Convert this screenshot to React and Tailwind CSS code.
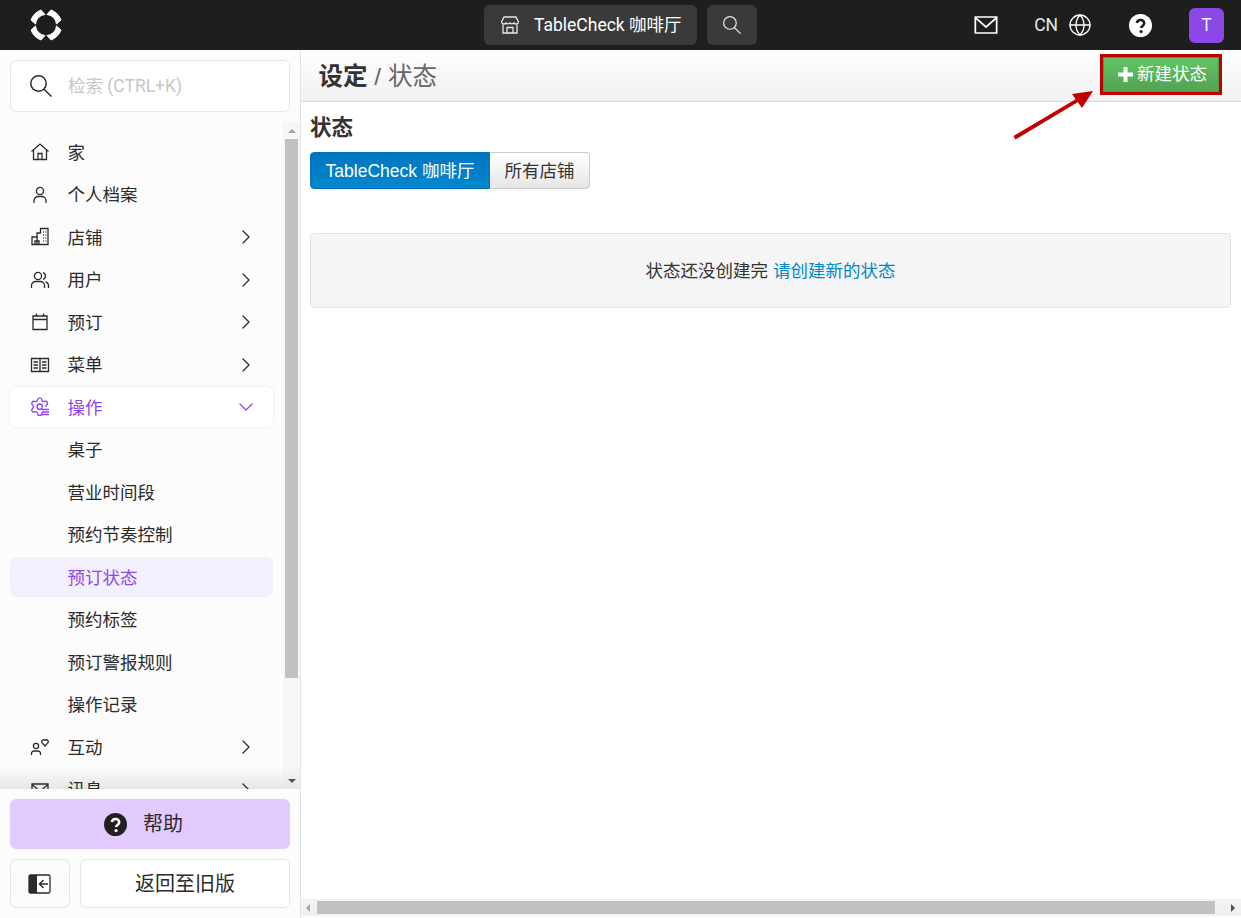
import React from 'react';
import { ChevronRight, ChevronDown, Globe } from 'lucide-react';

const CJK = 'font-["Roboto","Noto_Sans_CJK_SC",sans-serif]';

const HomeIcon = () => (
  <svg width="20" height="20" viewBox="0 0 20 20" fill="none" stroke="currentColor" strokeWidth="1.3">
    <path d="M1.500 9.500 10 2l8.500 7.500" />
    <path d="M3.500 8v9.500h13V8" />
    <path d="M8 17.500v-6h4v6" />
  </svg>
);
const UserIcon = () => (
  <svg width="20" height="20" viewBox="0 0 20 20" fill="none" stroke="currentColor" strokeWidth="1.3">
    <circle cx="10" cy="6" r="3.600" />
    <path d="M4 18v-2.500a4 4 0 0 1 4-4h4a4 4 0 0 1 4 4V18" />
  </svg>
);
const StoreIcon = () => (
  <svg width="20" height="20" viewBox="0 0 20 20" fill="none" stroke="currentColor" strokeWidth="1.3">
    <path d="M2 17.500V10h5V6h3.500V1.500H18v16z" />
    <path d="M7 10v7.500M5 17.500v-3.500h4v3.500" />
    <path d="M13 5h.8M15.500 5h.8M13 8h.8M15.500 8h.8M13 11h.8M15.500 11h.8M13 14h.8M15.500 14h.8" />
  </svg>
);
const UsersIcon = () => (
  <svg width="20" height="20" viewBox="0 0 20 20" fill="none" stroke="currentColor" strokeWidth="1.3">
    <circle cx="8" cy="6" r="3.600" />
    <path d="M1.500 18v-2.500a4 4 0 0 1 4-4h5a4 4 0 0 1 4 4V18" />
    <path d="M13 2.600a3.600 3.600 0 0 1 0 6.800M15.500 11.800a4 4 0 0 1 3 3.700V18" />
  </svg>
);
const CalendarIcon = () => (
  <svg width="20" height="20" viewBox="0 0 20 20" fill="none" stroke="currentColor" strokeWidth="1.3">
    <path d="M3 4h14v13.500H3zM3 7.500h14M6.500 1.500V4M13.500 1.500V4" />
  </svg>
);
const MenuBookIcon = () => (
  <svg width="20" height="20" viewBox="0 0 20 20" fill="none" stroke="currentColor" strokeWidth="1.3">
    <path d="M1.500 3.500h17v13h-17zM10 3.500v13" />
    <path d="M3.500 7h4.500M3.500 10h4.500M3.500 13h4.500M12 7h4.500M12 10h4.500M12 13h4.500" />
  </svg>
);
const GearListIcon = () => (
  <svg width="20" height="20" viewBox="0 0 20 20" fill="none" stroke="currentColor">
    <defs>
      <clipPath id="gear-cut">
        <path d="M0 0h24v12.500h-8.500V24H0z" />
      </clipPath>
    </defs>
    <g clipPath="url(#gear-cut)" strokeWidth="1.600" transform="scale(0.88) translate(-1 -1)">
      <path d="M9.671 4.136a2.34 2.34 0 0 1 4.659 0 2.34 2.34 0 0 0 3.319 1.915 2.34 2.34 0 0 1 2.33 4.033 2.34 2.34 0 0 0 0 3.831 2.34 2.34 0 0 1-2.33 4.033 2.34 2.34 0 0 0-3.319 1.915 2.34 2.34 0 0 1-4.659 0 2.34 2.34 0 0 0-3.32-1.915 2.34 2.34 0 0 1-2.33-4.033 2.34 2.34 0 0 0 0-3.831A2.34 2.34 0 0 1 6.35 6.051a2.34 2.34 0 0 0 3.319-1.915" />
      <circle cx="12" cy="12" r="3" />
    </g>
    <path d="M12 12.500h7M12 15h7M12 17.500h7" strokeWidth="1.300" />
  </svg>
);
const EngageIcon = () => (
  <svg width="20" height="20" viewBox="0 0 20 20" fill="none" stroke="currentColor" strokeWidth="1.3">
    <circle cx="6" cy="9" r="2.600" />
    <path d="M1.500 18v-1.500a2.500 2.500 0 0 1 2.500-2.500h4a2.500 2.500 0 0 1 2.500 2.500V18" />
    <path d="M15 9 11.800 5.500a2 2 0 0 1 3.200-2.200 2 2 0 0 1 3.200 2.200z" />
  </svg>
);
const EnvelopeIcon = ({ width = 20, height = 20, view = '0 0 20 20' }) => (
  <svg width={width} height={height} viewBox={view} fill="none" stroke="currentColor" strokeWidth="1.3">
    <path d="M2 4h16v12H2zM2 4.500l8 7 8-7" />
  </svg>
);
const StorefrontIcon = () => (
  <svg width="20" height="20" viewBox="0 0 20 20" fill="none" stroke="currentColor" strokeWidth="1.300">
    <path d="M4 2h12l2.500 5a2.500 2.500 0 0 1-4.500 1 3 3 0 0 1-4 0 3 3 0 0 1-4 0 2.500 2.500 0 0 1-4.500-1z" />
    <path d="M3 9.500V18h14V9.500M7 18v-5.500h6V18" />
  </svg>
);
const MagnifierIcon = ({ size, className }) => (
  <svg width={size} height={size} viewBox="0 0 22 22" fill="none" stroke="currentColor" strokeWidth="1.500" className={className}>
    <circle cx="8.500" cy="8.500" r="7.700" />
    <path d="M14 14.300 21.500 21.500" />
  </svg>
);
const QuestionDot = ({ size, bg, fg }) => (
  <svg width={size} height={size} viewBox="0 0 24 24">
    <circle cx="12" cy="12" r="12" fill={bg} />
    <path d="M8.200 9.300a3.900 3.900 0 0 1 7.700.4c0 2.600-3.300 2.800-3.300 5" fill="none" stroke={fg} strokeWidth="2.700" />
    <circle cx="12.600" cy="18.300" r="1.700" fill={fg} />
  </svg>
);
const petal = 'M1 11A17 17 0 0 1 11 1L15 5.500A10.500 10.500 0 0 0 5.500 15z';
const Logo = () => (
  <svg width="32" height="32" viewBox="0 0 32 32" fill="#fff" stroke="#fff" strokeWidth="1" strokeLinejoin="round">
    <path d={petal} />
    <path d={petal} transform="rotate(90 16 16)" />
    <path d={petal} transform="rotate(180 16 16)" />
    <path d={petal} transform="rotate(270 16 16)" />
  </svg>
);

const mainNav = [
  { label: '家', Icon: HomeIcon },
  { label: '个人档案', Icon: UserIcon },
  { label: '店铺', Icon: StoreIcon, arrow: true },
  { label: '用户', Icon: UsersIcon, arrow: true },
  { label: '预订', Icon: CalendarIcon, arrow: true },
  { label: '菜单', Icon: MenuBookIcon, arrow: true },
];
const subNav = ['桌子', '营业时间段', '预约节奏控制', '预订状态', '预约标签', '预订警报规则', '操作记录'];

const NavRow = ({ label, Icon, arrow }) => (
  <div className="mx-[10px] flex h-[42.5px] shrink-0 items-center pl-[20px] pr-[15px] text-[#2b2b2b]">
    <span className="flex w-[37.5px] shrink-0"><Icon /></span>
    <span className="flex-1 pt-[1px]">{label}</span>
    {arrow && <ChevronRight size={24} strokeWidth={1.300} />}
  </div>
);

const TopBar = () => (
  <header className="flex h-[50px] shrink-0 items-center bg-[#1e1e1e] text-white">
    <div className="ml-[30px] flex w-[454px]"><Logo /></div>
    <div className="flex h-[40px] w-[213px] items-center rounded-md bg-[#3a3a3a] pl-[16px]">
      <span className="w-[34px] text-[#e8e8e8]"><StorefrontIcon /></span>
      <span className="pt-[1px]">TableCheck 咖啡厅</span>
    </div>
    <div className="ml-[10px] flex h-[40px] w-[50px] items-center justify-center rounded-md bg-[#3a3a3a] text-[#e8e8e8]">
      <MagnifierIcon size={18} />
    </div>
    <div className="ml-auto flex items-center pr-[17px]">
      <span className="mr-[36px] flex"><EnvelopeIcon width={24} height={24} view="1 1 18 18" /></span>
      <span className="mr-[10px] pt-[1px] text-[#e8e8e8]">CN</span>
      <Globe size={24} strokeWidth={1.300} className="mr-[37px]" />
      <span className="mr-[37px] flex"><QuestionDot size={23} bg="#fff" fg="#1e1e1e" /></span>
      <div className="flex h-[35px] w-[35px] items-center justify-center rounded-md bg-[#8b48e6] text-[#f4ecff]">T</div>
    </div>
  </header>
);

const Sidebar = () => (
  <aside className="flex w-[301px] shrink-0 flex-col overflow-hidden border-r border-[#e3e3e3] bg-[#fcfcfc]">
    <div className="mx-[10px] mt-[10px] flex h-[52px] shrink-0 items-center rounded-md border border-[#e6e6e6] bg-white pl-[19px]">
      <MagnifierIcon size={22} className="mr-[16px] text-[#2b2b2b]" />
      <span className="pt-[1px] text-[#c6c6c6]">检索 (CTRL+K)</span>
    </div>
    <div className="relative mt-[10px] flex min-h-0 flex-1">
      <nav className="relative z-10 flex min-w-0 flex-1 flex-col overflow-hidden pt-[9px]">
        {mainNav.map((item) => <NavRow key={item.label} {...item} />)}
        <div className="mx-[10px] flex h-[42.5px] shrink-0 items-center">
          <div className="flex h-[40px] w-full items-center rounded-md bg-white pl-[20px] pr-[15px] text-[#9146ea] shadow-[0_0_3px_rgba(0,0,0,0.1)]">
            <span className="flex w-[37.5px] shrink-0"><GearListIcon /></span>
            <span className="flex-1 pt-[1px]">操作</span>
            <ChevronDown size={24} strokeWidth={1.300} />
          </div>
        </div>
        {subNav.map((label) => (
          <div
            key={label}
            className={label === '预订状态'
              ? 'mx-[10px] flex h-[42.5px] shrink-0 items-center'
              : 'mx-[10px] flex h-[42.500px] shrink-0 items-center pl-[57.5px] pt-[1px] text-[#2b2b2b]'}
          >
            {label === '预订状态'
              ? <span className="flex h-[40px] w-full items-center rounded-md bg-[#f3f0fe] pl-[57.5px] pt-[1px] text-[#9146ea]">{label}</span>
              : label}
          </div>
        ))}
        <NavRow label="互动" Icon={EngageIcon} arrow />
        <NavRow label="讯息" Icon={EnvelopeIcon} arrow />
      </nav>
      <div className="flex w-[17px] shrink-0 flex-col items-center bg-[#f6f6f6]">
        <div className="flex h-[17px] w-full items-center justify-center">
          <span className="h-0 w-0 border-x-[4px] border-b-[4px] border-x-transparent border-b-[#a3a3a3]" />
        </div>
        <div className="h-[539px] w-[13px] bg-[#c1c1c1]" />
        <div className="relative z-10 mt-auto flex h-[17px] w-full items-center justify-center">
          <span className="h-0 w-0 border-x-[4px] border-t-[4px] border-x-transparent border-t-[#505050]" />
        </div>
      </div>
      <div className="pointer-events-none absolute inset-x-0 bottom-0 z-[5] h-[22px] bg-gradient-to-b from-transparent to-[#e6e6e6]" />
    </div>
    <div className="flex shrink-0 flex-col gap-[10px] bg-[#fcfcfc] p-[10px]">
      <div className="flex h-[50px] items-center justify-center rounded-md bg-[#e2caff] pr-[13px] text-[20px] text-[#2b2b2b]">
        <span className="mr-[16px] flex"><QuestionDot size={23} bg="#231f20" fg="#fff" /></span>
        帮助
      </div>
      <div className="flex h-[49px] gap-[10px]">
        <div className="flex w-[60px] items-center justify-center rounded-md border border-[#e6e6e6]">
          <svg width="24" height="20" viewBox="0 0 24 20" fill="none">
            <rect x="1" y="1" width="21" height="18" rx="1.500" fill="#fff" stroke="#2b2b2b" strokeWidth="1.300" />
            <path d="M1 2.500A1.500 1.500 0 0 1 2.500 1H9v18H2.500A1.500 1.500 0 0 1 1 17.500z" fill="#2b2b2b" />
            <path d="M20 10h-8M15.500 6 11.500 10l4 4" stroke="#2b2b2b" strokeWidth="1.500" />
          </svg>
        </div>
        <div className="flex flex-1 items-center justify-center rounded-md border border-[#e6e6e6] bg-white pt-[1px] text-[20px] text-[#2b2b2b]">
          返回至旧版
        </div>
      </div>
    </div>
  </aside>
);

const Main = () => (
  <main className='relative flex min-w-0 flex-1 flex-col bg-white font-["Liberation_Sans","Noto_Sans_CJK_SC",sans-serif] text-[#333]'>
    <div className="flex h-[52px] shrink-0 items-center border-b border-[#d9d9d9] bg-gradient-to-b from-white to-[#f1f1f1] pl-[17.5px] pr-[19px]">
      <h1 className="pt-[3px] text-[24.5px] text-[#666]">
        <b className="text-[#333]">设定</b> / 状态
      </h1>
      <div className="mb-[2px] ml-auto border-[3px] border-[#c00000]">
        <button className="flex h-[35px] w-[116px] items-center justify-center border border-[#4a9a4a] bg-gradient-to-b from-[#62c462] to-[#51a351] pl-[3px] text-white">
          <svg width="15" height="15" viewBox="0 0 15 15" fill="#fff" className="mr-[4px]">
            <path d="M5.500 0h4v5.500h5.500v4h-5.500v5.500h-4v-5.500H0v-4h5.500z" />
          </svg>
          <span>新建状态</span>
        </button>
      </div>
    </div>
    <div className="flex min-h-0 flex-1 flex-col pl-[9px] pr-[10px] pt-[12px]">
      <h2 className="text-[21.5px] font-bold leading-[28px]">状态</h2>
      <div className="mt-[10px] flex h-[37px]">
        <div className="flex w-[180px] items-center justify-center rounded-l-[4px] border border-[#0070b8] bg-gradient-to-b from-[#0075c0] to-[#0088cc] pt-[1px] text-white">
          TableCheck 咖啡厅
        </div>
        <div className="flex w-[100px] items-center justify-center rounded-r-[4px] border border-l-0 border-[#cccccc] bg-gradient-to-b from-white to-[#e6e6e6] pt-[1px]">
          所有店铺
        </div>
      </div>
      <div className="mt-[44px] flex h-[75px] items-center justify-center rounded-[4px] border border-[#e3e3e3] bg-[#f5f5f5] pt-[1px]">
        状态还没创建完&nbsp;<span className="text-[#0088cc]">请创建新的状态</span>
      </div>
    </div>
    <div className="mb-[2px] flex h-[17px] shrink-0 items-center bg-[#f1f1f1]">
      <span className="ml-[5px] h-0 w-0 border-y-[4px] border-r-[4px] border-y-transparent border-r-[#a3a3a3]" />
      <div className="ml-[7px] h-[13px] w-[898px] bg-[#c1c1c1]" />
      <span className="ml-auto mr-[6px] h-0 w-0 border-y-[4px] border-l-[4px] border-y-transparent border-l-[#505050]" />
    </div>
    <svg className="pointer-events-none absolute left-[712px] top-[38px]" width="82" height="54" viewBox="0 0 82 54" fill="#c00000">
      <path d="M0.500 48 63 11l2 3L2.500 51.500z" />
      <path d="M80 3 59 6 69 20z" />
    </svg>
  </main>
);

export default function App() {
  return (
    <div className={`flex h-[918px] w-[1241px] flex-col overflow-hidden bg-white text-[17.5px] ${CJK}`}>
      <TopBar />
      <div className="flex min-h-0 flex-1">
        <Sidebar />
        <Main />
      </div>
    </div>
  );
}
